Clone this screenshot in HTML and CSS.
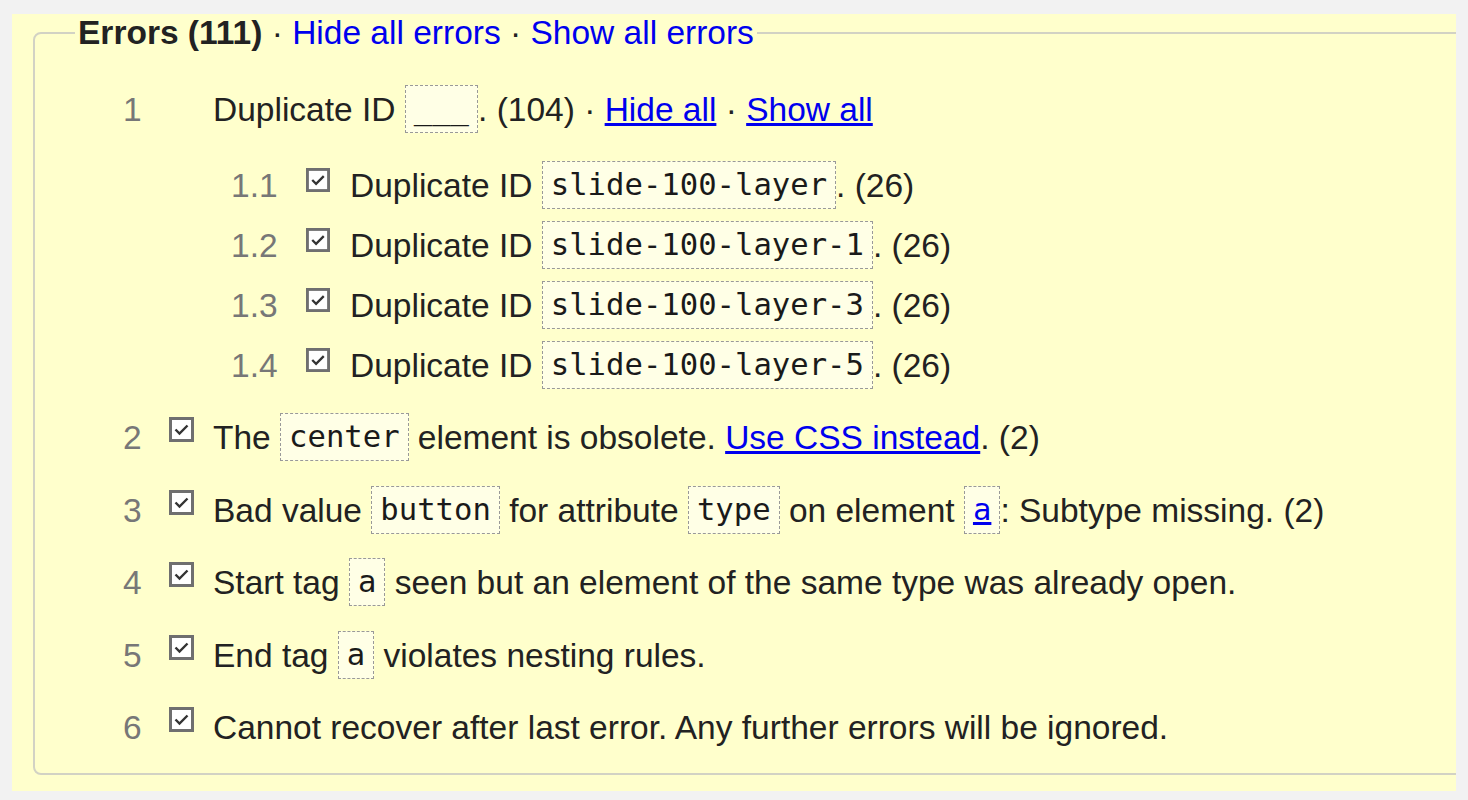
FILE: index.html
```html
<!DOCTYPE html>
<html lang="en">
<head>
<meta charset="utf-8">
<title>Errors</title>
<link rel="stylesheet" href="styles.css">
</head>
<body>
<div class="panel">
  <fieldset class="box">
    <legend class="legend"><strong>Errors (111)</strong> · <a href="#" class="plain">Hide all errors</a> · <a href="#" class="plain">Show all errors</a></legend>
    <ol class="errors">
      <li class="err">
        <div class="line">
          <span class="num">1</span><span class="slot"></span><span class="msg">Duplicate ID <code class="code">___</code>. (104) · <a href="#">Hide all</a> · <a href="#">Show all</a></span>
        </div>
        <ol class="sub">
          <li class="line sline">
            <span class="num snum">1.1</span><span class="slot"><svg class="cb" viewBox="0 0 25 25" width="25" height="25"><rect x="1.5" y="1.5" width="22" height="22" fill="#fff" stroke="#6f6f6f" stroke-width="3"/><polyline points="6.5,12.5 10.5,16.5 18.5,8.5" fill="none" stroke="#333" stroke-width="2.4"/></svg></span><span class="msg">Duplicate ID <code class="code">slide-100-layer</code>. (26)</span>
          </li>
          <li class="line sline">
            <span class="num snum">1.2</span><span class="slot"><svg class="cb" viewBox="0 0 25 25" width="25" height="25"><rect x="1.5" y="1.5" width="22" height="22" fill="#fff" stroke="#6f6f6f" stroke-width="3"/><polyline points="6.5,12.5 10.5,16.5 18.5,8.5" fill="none" stroke="#333" stroke-width="2.4"/></svg></span><span class="msg">Duplicate ID <code class="code">slide-100-layer-1</code>. (26)</span>
          </li>
          <li class="line sline">
            <span class="num snum">1.3</span><span class="slot"><svg class="cb" viewBox="0 0 25 25" width="25" height="25"><rect x="1.5" y="1.5" width="22" height="22" fill="#fff" stroke="#6f6f6f" stroke-width="3"/><polyline points="6.5,12.5 10.5,16.5 18.5,8.5" fill="none" stroke="#333" stroke-width="2.4"/></svg></span><span class="msg">Duplicate ID <code class="code">slide-100-layer-3</code>. (26)</span>
          </li>
          <li class="line sline">
            <span class="num snum">1.4</span><span class="slot"><svg class="cb" viewBox="0 0 25 25" width="25" height="25"><rect x="1.5" y="1.5" width="22" height="22" fill="#fff" stroke="#6f6f6f" stroke-width="3"/><polyline points="6.5,12.5 10.5,16.5 18.5,8.5" fill="none" stroke="#333" stroke-width="2.4"/></svg></span><span class="msg">Duplicate ID <code class="code">slide-100-layer-5</code>. (26)</span>
          </li>
        </ol>
      </li>
      <li class="err">
        <div class="line">
          <span class="num">2</span><span class="slot"><svg class="cb" viewBox="0 0 25 25" width="25" height="25"><rect x="1.5" y="1.5" width="22" height="22" fill="#fff" stroke="#6f6f6f" stroke-width="3"/><polyline points="6.5,12.5 10.5,16.5 18.5,8.5" fill="none" stroke="#333" stroke-width="2.4"/></svg></span><span class="msg">The <code class="code">center</code> element is obsolete. <a href="#">Use CSS instead</a>. (2)</span>
        </div>
      </li>
      <li class="err">
        <div class="line">
          <span class="num">3</span><span class="slot"><svg class="cb" viewBox="0 0 25 25" width="25" height="25"><rect x="1.5" y="1.5" width="22" height="22" fill="#fff" stroke="#6f6f6f" stroke-width="3"/><polyline points="6.5,12.5 10.5,16.5 18.5,8.5" fill="none" stroke="#333" stroke-width="2.4"/></svg></span><span class="msg">Bad value <code class="code">button</code> for attribute <code class="code">type</code> on element <code class="code"><a href="#">a</a></code>: Subtype missing. (2)</span>
        </div>
      </li>
      <li class="err">
        <div class="line">
          <span class="num">4</span><span class="slot"><svg class="cb" viewBox="0 0 25 25" width="25" height="25"><rect x="1.5" y="1.5" width="22" height="22" fill="#fff" stroke="#6f6f6f" stroke-width="3"/><polyline points="6.5,12.5 10.5,16.5 18.5,8.5" fill="none" stroke="#333" stroke-width="2.4"/></svg></span><span class="msg">Start tag <code class="code">a</code> seen but an element of the same type was already open.</span>
        </div>
      </li>
      <li class="err">
        <div class="line">
          <span class="num">5</span><span class="slot"><svg class="cb" viewBox="0 0 25 25" width="25" height="25"><rect x="1.5" y="1.5" width="22" height="22" fill="#fff" stroke="#6f6f6f" stroke-width="3"/><polyline points="6.5,12.5 10.5,16.5 18.5,8.5" fill="none" stroke="#333" stroke-width="2.4"/></svg></span><span class="msg">End tag <code class="code">a</code> violates nesting rules.</span>
        </div>
      </li>
      <li class="err">
        <div class="line">
          <span class="num">6</span><span class="slot"><svg class="cb" viewBox="0 0 25 25" width="25" height="25"><rect x="1.5" y="1.5" width="22" height="22" fill="#fff" stroke="#6f6f6f" stroke-width="3"/><polyline points="6.5,12.5 10.5,16.5 18.5,8.5" fill="none" stroke="#333" stroke-width="2.4"/></svg></span><span class="msg">Cannot recover after last error. Any further errors will be ignored.</span>
        </div>
      </li>
    </ol>
  </fieldset>
</div>
</body>
</html>
```

FILE: styles.css
```css
html, body {
  margin: 0;
  padding: 0;
  background: #f2f2f2;
}
body {
  font-family: "Liberation Sans", Arial, sans-serif;
  font-size: 33.5px;
  color: #222;
}
.panel {
  margin: 14px 12px 0 12px;
  height: 777px;
  background: #ffffcc;
  overflow: hidden;
}
.box {
  margin: 0 0 0 21px;
  width: 1500px;
  padding: 0 0 2px 0;
  border: 2px solid #d2d2c4;
  border-radius: 8px;
  box-sizing: border-box;
  min-inline-size: 0;
}
.legend {
  margin-left: 40px;
  padding: 0 3px;
  line-height: 38px;
}
.legend strong {
  font-weight: bold;
}
a {
  color: #0000ee;
}
a.plain {
  text-decoration: none;
}
.errors, .sub {
  list-style: none;
  margin: 0;
  padding: 0;
}
.errors {
  margin-top: 28px;
  margin-left: 88px;
}
.err {
  margin-bottom: 12.5px;
}
.line {
  display: block;
  height: 60px;
  line-height: 60px;
  white-space: nowrap;
}
.num {
  display: inline-block;
  width: 46px;
  color: #777;
}
.slot {
  display: inline-block;
  width: 44px;
}
.cb {
  vertical-align: 7px;
}
.sub {
  margin-top: 16px;
  margin-left: 108px;
  margin-bottom: -0.5px;
}
.snum {
  width: 75px;
}
.sline .cb {
  vertical-align: 5px;
  width: 24px;
  height: 24px;
}
.code {
  display: inline-block;
  font-family: "DejaVu Sans Mono", "Liberation Mono", monospace;
  font-size: 30.6px;
  line-height: 46px;
  padding: 0 8px;
  border: 1px dashed #999;
  background: #ffffe6;
  color: #1a1a1a;
  vertical-align: middle;
  margin-top: -6px;
}
```
